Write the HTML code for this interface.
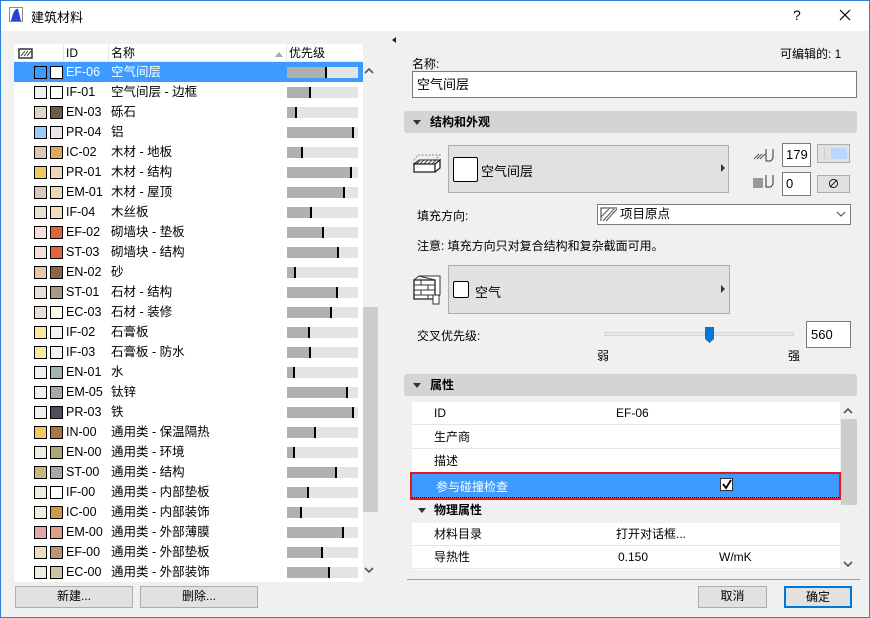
<!DOCTYPE html>
<html><head><meta charset="utf-8"><style>
*{margin:0;padding:0;box-sizing:border-box}
body{width:870px;height:618px;overflow:hidden;background:#f0f0f0;font-family:"Liberation Sans","Noto Sans CJK SC",sans-serif;font-size:12px;color:#000;position:relative}
.a{position:absolute}
#tb{left:0;top:0;width:870px;height:31px;background:#fff;border:1px solid #2b7fd4;border-bottom:none}
#win{left:0;top:0;width:870px;height:618px;border:1px solid #2b7fd4;pointer-events:none}
.list{left:14px;top:44px;width:349px;height:538px;background:#fff}
.row{position:absolute;left:0;width:349px;height:20px;line-height:20px;font-size:12.5px}
.row.sel{background:#3d9bff;color:#fff}
.s1,.s2{position:absolute;top:4px;width:13px;height:13px;border:1px solid #000}
.s1{left:20px}.s2{left:36px}
.id{position:absolute;left:52px}
.nm{position:absolute;left:97px}
.bar{position:absolute;left:273px;top:5px;width:71px;height:11px;background:#e4e4e4}
.bar i{position:absolute;left:0;top:0;height:11px;background:#b0b0b0;border-right:2px solid #000}
.btn{position:absolute;background:#e1e1e1;border:1px solid #adadad;text-align:center;line-height:19px;font-size:12px}
.inp{position:absolute;background:#fff;border:1px solid #7a7a7a;padding-left:4px}
.sec{position:absolute;left:404px;width:453px;height:22px;background:#d4d4d4;border-radius:3px;font-weight:bold;line-height:22px;padding-left:26px;font-size:12px}
.sec:before{content:"";position:absolute;left:9px;top:9px;border:4px solid transparent;border-top:5px solid #333}
.pr{position:absolute;left:412px;width:428px;height:23px;line-height:23px;background:#fff;border-bottom:1px solid #e6e6e6}
.pr span{position:absolute}
</style></head><body>
<div id="tb" class="a"></div>
<svg class="a" style="left:9px;top:7px" width="14" height="15"><rect x="0.5" y="0.5" width="13" height="14" fill="#fff" stroke="#888"/><path d="M2 14 C4 4 7 1 9 2 C10 6 11 10 12 14Z" fill="#2a3fd6"/></svg>
<div class="a" style="left:31px;top:7px;font-size:13px">建筑材料</div>
<div class="a" style="left:793px;top:7px;font-size:14px">?</div>
<svg class="a" style="left:839px;top:9px" width="12" height="12"><path d="M1 1L11 11M11 1L1 11" stroke="#000" stroke-width="1.2"/></svg>

<div class="list a">
<div class="a" style="left:0;top:0;width:349px;height:18px;border-bottom:1px solid #eee;line-height:18px">
<svg class="a" style="left:4px;top:4px" width="15" height="11"><rect x="1" y="1" width="13" height="9" fill="none" stroke="#333" stroke-width="1.5"/><path d="M3 8L7 3M6 8L10 3M9 8L13 3" stroke="#333"/></svg>
<div class="a" style="left:49px;top:0;width:1px;height:18px;background:#e5e5e5"></div>
<span class="a" style="left:52px">ID</span>
<div class="a" style="left:94px;top:0;width:1px;height:18px;background:#e5e5e5"></div>
<span class="a" style="left:97px">名称</span>
<div class="a" style="left:261px;top:8px;border:4px solid transparent;border-bottom:5px solid #aaa;border-top:none"></div>
<div class="a" style="left:272px;top:0;width:1px;height:18px;background:#e5e5e5"></div>
<span class="a" style="left:275px">优先级</span>
</div>
<div class="row sel" style="top:18px"><b class="s1" style="background:#3d9bff"></b><b class="s2" style="background:#fff"></b><span class="id">EF-06</span><span class="nm">空气间层</span><div class="bar"><i style="width:40px"></i></div></div>
<div class="row" style="top:38px"><b class="s1" style="background:#f0f0f0"></b><b class="s2" style="background:#fff"></b><span class="id">IF-01</span><span class="nm">空气间层 - 边框</span><div class="bar"><i style="width:24px"></i></div></div>
<div class="row" style="top:58px"><b class="s1" style="background:#e0d6c8"></b><b class="s2" style="background:#6e5a46"></b><span class="id">EN-03</span><span class="nm">砾石</span><div class="bar"><i style="width:10px"></i></div></div>
<div class="row" style="top:78px"><b class="s1" style="background:#99c9ff"></b><b class="s2" style="background:#ece4e4"></b><span class="id">PR-04</span><span class="nm">铝</span><div class="bar"><i style="width:67px"></i></div></div>
<div class="row" style="top:98px"><b class="s1" style="background:#dcc8b8"></b><b class="s2" style="background:#e0a858"></b><span class="id">IC-02</span><span class="nm">木材 - 地板</span><div class="bar"><i style="width:16px"></i></div></div>
<div class="row" style="top:118px"><b class="s1" style="background:#f0c860"></b><b class="s2" style="background:#ecd8b8"></b><span class="id">PR-01</span><span class="nm">木材 - 结构</span><div class="bar"><i style="width:65px"></i></div></div>
<div class="row" style="top:138px"><b class="s1" style="background:#dcc8b8"></b><b class="s2" style="background:#ecd8b8"></b><span class="id">EM-01</span><span class="nm">木材 - 屋顶</span><div class="bar"><i style="width:58px"></i></div></div>
<div class="row" style="top:158px"><b class="s1" style="background:#e8e0d0"></b><b class="s2" style="background:#f0dcc0"></b><span class="id">IF-04</span><span class="nm">木丝板</span><div class="bar"><i style="width:25px"></i></div></div>
<div class="row" style="top:178px"><b class="s1" style="background:#f4e0d8"></b><b class="s2" style="background:#e0643c"></b><span class="id">EF-02</span><span class="nm">砌墙块 - 垫板</span><div class="bar"><i style="width:37px"></i></div></div>
<div class="row" style="top:198px"><b class="s1" style="background:#f4e0d8"></b><b class="s2" style="background:#e0643c"></b><span class="id">ST-03</span><span class="nm">砌墙块 - 结构</span><div class="bar"><i style="width:52px"></i></div></div>
<div class="row" style="top:218px"><b class="s1" style="background:#e8c8a8"></b><b class="s2" style="background:#8c6448"></b><span class="id">EN-02</span><span class="nm">砂</span><div class="bar"><i style="width:9px"></i></div></div>
<div class="row" style="top:238px"><b class="s1" style="background:#e8e0d8"></b><b class="s2" style="background:#a89888"></b><span class="id">ST-01</span><span class="nm">石材 - 结构</span><div class="bar"><i style="width:51px"></i></div></div>
<div class="row" style="top:258px"><b class="s1" style="background:#e8e0d8"></b><b class="s2" style="background:#fcfcec"></b><span class="id">EC-03</span><span class="nm">石材 - 装修</span><div class="bar"><i style="width:45px"></i></div></div>
<div class="row" style="top:278px"><b class="s1" style="background:#f8e8a0"></b><b class="s2" style="background:#f0f4ec"></b><span class="id">IF-02</span><span class="nm">石膏板</span><div class="bar"><i style="width:23px"></i></div></div>
<div class="row" style="top:298px"><b class="s1" style="background:#f8e8a0"></b><b class="s2" style="background:#f0f4ec"></b><span class="id">IF-03</span><span class="nm">石膏板 - 防水</span><div class="bar"><i style="width:24px"></i></div></div>
<div class="row" style="top:318px"><b class="s1" style="background:#f0f0f0"></b><b class="s2" style="background:#a0b4b0"></b><span class="id">EN-01</span><span class="nm">水</span><div class="bar"><i style="width:8px"></i></div></div>
<div class="row" style="top:338px"><b class="s1" style="background:#f0f0f0"></b><b class="s2" style="background:#a8a8a8"></b><span class="id">EM-05</span><span class="nm">钛锌</span><div class="bar"><i style="width:61px"></i></div></div>
<div class="row" style="top:358px"><b class="s1" style="background:#f0f0f0"></b><b class="s2" style="background:#4c5058"></b><span class="id">PR-03</span><span class="nm">铁</span><div class="bar"><i style="width:67px"></i></div></div>
<div class="row" style="top:378px"><b class="s1" style="background:#f8c860"></b><b class="s2" style="background:#a87840"></b><span class="id">IN-00</span><span class="nm">通用类 - 保温隔热</span><div class="bar"><i style="width:29px"></i></div></div>
<div class="row" style="top:398px"><b class="s1" style="background:#f0ece0"></b><b class="s2" style="background:#aca878"></b><span class="id">EN-00</span><span class="nm">通用类 - 环境</span><div class="bar"><i style="width:8px"></i></div></div>
<div class="row" style="top:418px"><b class="s1" style="background:#c8b880"></b><b class="s2" style="background:#a8a8a8"></b><span class="id">ST-00</span><span class="nm">通用类 - 结构</span><div class="bar"><i style="width:50px"></i></div></div>
<div class="row" style="top:438px"><b class="s1" style="background:#f0ece0"></b><b class="s2" style="background:#fff"></b><span class="id">IF-00</span><span class="nm">通用类 - 内部垫板</span><div class="bar"><i style="width:22px"></i></div></div>
<div class="row" style="top:458px"><b class="s1" style="background:#f0ece0"></b><b class="s2" style="background:#d09848"></b><span class="id">IC-00</span><span class="nm">通用类 - 内部装饰</span><div class="bar"><i style="width:15px"></i></div></div>
<div class="row" style="top:478px"><b class="s1" style="background:#e0a8a8"></b><b class="s2" style="background:#e09c84"></b><span class="id">EM-00</span><span class="nm">通用类 - 外部薄膜</span><div class="bar"><i style="width:57px"></i></div></div>
<div class="row" style="top:498px"><b class="s1" style="background:#ecdcc0"></b><b class="s2" style="background:#bc9474"></b><span class="id">EF-00</span><span class="nm">通用类 - 外部垫板</span><div class="bar"><i style="width:36px"></i></div></div>
<div class="row" style="top:518px"><b class="s1" style="background:#f0ece0"></b><b class="s2" style="background:#c8c4a4"></b><span class="id">EC-00</span><span class="nm">通用类 - 外部装饰</span><div class="bar"><i style="width:43px"></i></div></div>
</div>
<div class="a" style="left:363px;top:307px;width:15px;height:205px;background:#cdcdcd"></div>
<svg class="a" style="left:364px;top:67px" width="10" height="8"><path d="M1 6L5 2L9 6" fill="none" stroke="#555" stroke-width="1.6"/></svg>
<svg class="a" style="left:364px;top:566px" width="10" height="8"><path d="M1 2L5 6L9 2" fill="none" stroke="#555" stroke-width="1.6"/></svg>
<div class="btn" style="left:15px;top:586px;width:118px;height:22px">新建...</div>
<div class="btn" style="left:140px;top:586px;width:118px;height:22px">删除...</div>

<div class="a" style="left:392px;top:37px;border:3px solid transparent;border-right:4px solid #222;border-left:none"></div>
<div class="a" style="left:780px;top:45px">可编辑的: 1</div>
<div class="a" style="left:412px;top:55px">名称:</div>
<div class="inp" style="left:412px;top:71px;width:445px;height:27px;line-height:25px;font-size:13px">空气间层</div>
<div class="sec" style="top:111px">结构和外观</div>

<svg class="a" style="left:413px;top:154px" width="28" height="28"><path d="M5 1h22l-5 5v0M1 10V6l4-5" fill="none" stroke="#888" stroke-dasharray="2 1.5"/><path d="M1 10L6 6H27L22 10Z" fill="#fff" stroke="#222"/><path d="M3 10L7 7M7 10L11 6M11 10L15 6M15 10L19 6M19 10L23 6M23 10L26 7" stroke="#444"/><path d="M1 10H22V18H1Z M22 10L27 6V14L22 18" fill="#fff" stroke="#222" stroke-width="1.3"/></svg>
<div class="btn" style="left:448px;top:145px;width:281px;height:48px"></div>
<div class="a" style="left:453px;top:157px;width:25px;height:25px;background:#fff;border:1px solid #000;border-radius:2px"></div>
<div class="a" style="left:481px;top:161px;font-size:13px">空气间层</div>
<div class="a" style="left:721px;top:164px;border:4px solid transparent;border-left:4px solid #333;border-right:none"></div>

<svg class="a" style="left:753px;top:147px" width="24" height="17"><path d="M1 12L6 7M4 12L9 7M7 12L12 7" stroke="#555"/><path d="M13 2V14H18M20 2V11L18 14" fill="none" stroke="#333"/></svg>
<div class="inp" style="left:782px;top:143px;width:29px;height:24px;line-height:22px;font-size:13px;padding-left:3px">179</div>
<div class="btn" style="left:817px;top:144px;width:33px;height:19px"><div class="a" style="left:13px;top:3px;width:16px;height:11px;background:#b8d8ff;border-radius:2px"></div><div class="a" style="left:6px;top:3px;width:1px;height:11px;background:#ccc"></div></div>
<svg class="a" style="left:753px;top:173px" width="24" height="20"><rect x="0" y="5" width="10" height="10" fill="#999"/><path d="M13 2V14H18M20 2V11L18 14" fill="none" stroke="#333"/></svg>
<div class="inp" style="left:782px;top:172px;width:29px;height:24px;line-height:22px;font-size:13px;padding-left:3px">0</div>
<div class="btn" style="left:817px;top:175px;width:33px;height:18px;line-height:16px">∅</div>

<div class="a" style="left:417px;top:207px">填充方向:</div>
<div class="inp" style="left:597px;top:204px;width:254px;height:21px;line-height:19px;padding-left:22px;font-size:12.5px">项目原点</div>
<svg class="a" style="left:600px;top:207px" width="18" height="15"><path d="M1 14V1H17" fill="none" stroke="#333"/><path d="M3 14L14 2M6 14L17 2M1 10L9 2" stroke="#555"/></svg>
<svg class="a" style="left:836px;top:211px" width="10" height="7"><path d="M1 1L5 5L9 1" fill="none" stroke="#444"/></svg>
<div class="a" style="left:417px;top:237px">注意: 填充方向只对复合结构和复杂截面可用。</div>

<svg class="a" style="left:413px;top:275px" width="28" height="30"><path d="M6 1H27L27 20L22 24V5Z M1 5L6 1 M1 5H22" fill="#fff" stroke="#333"/><path d="M1 5H22V24H1Z" fill="#fff" stroke="#222" stroke-width="1.3"/><path d="M1 10H22M1 15H22M1 20H22M8 5V10M15 10V15M8 15V20M15 20V24" stroke="#333"/><rect x="20" y="20" width="6" height="9" fill="#fff" stroke="#333"/></svg>
<div class="btn" style="left:448px;top:265px;width:282px;height:49px"></div>
<div class="a" style="left:453px;top:281px;width:16px;height:17px;background:#fff;border:1px solid #000;border-radius:2px"></div>
<div class="a" style="left:475px;top:282px;font-size:13px">空气</div>
<div class="a" style="left:721px;top:285px;border:4px solid transparent;border-left:4px solid #333;border-right:none"></div>

<div class="a" style="left:417px;top:327px">交叉优先级:</div>
<div class="a" style="left:604px;top:332px;width:190px;height:4px;background:#e7e7e7;border:1px solid #d6d6d6"></div>
<svg class="a" style="left:705px;top:327px" width="9" height="16"><path d="M0 0H9V12L4.5 16L0 12Z" fill="#0078d7"/></svg>
<div class="inp" style="left:806px;top:321px;width:45px;height:27px;line-height:25px;font-size:13px">560</div>
<div class="a" style="left:597px;top:347px">弱</div>
<div class="a" style="left:788px;top:347px">强</div>

<div class="sec" style="top:374px">属性</div>
<div class="a" style="left:412px;top:402px;width:428px;height:168px;background:#fff"></div>
<div class="pr" style="top:402px"><span style="left:22px">ID</span><span style="left:204px">EF-06</span></div>
<div class="pr" style="top:426px"><span style="left:22px">生产商</span></div>
<div class="pr" style="top:450px"><span style="left:22px">描述</span></div>
<div class="a" style="left:410px;top:472px;width:431px;height:28px;border:2px solid #e8161c;background:#3d9bff">
<span class="a" style="left:24px;top:4px;color:#fff">参与碰撞检查</span>
<svg class="a" style="left:308px;top:4px" width="14" height="14"><rect x="0.5" y="0.5" width="12" height="12" fill="#fff" stroke="#333"/><path d="M3 6L6 10L11 2" fill="none" stroke="#000" stroke-width="1.8"/></svg>
<div class="a" style="left:0;bottom:0;width:427px;height:1px;border-bottom:1px dotted #000"></div></div>
<div class="a" style="left:412px;top:500px;width:428px;height:23px;background:#f0f0f0;font-weight:bold;line-height:21px;padding-left:22px">物理属性</div>
<div class="a" style="left:418px;top:508px;border:4px solid transparent;border-top:5px solid #333"></div>
<div class="pr" style="top:523px"><span style="left:22px">材料目录</span><span style="left:204px">打开对话框...</span></div>
<div class="pr" style="top:546px"><span style="left:22px">导热性</span><span style="left:206px">0.150</span><span style="left:307px">W/mK</span></div>
<div class="a" style="left:841px;top:419px;width:16px;height:86px;background:#cdcdcd"></div>
<svg class="a" style="left:843px;top:407px" width="10" height="8"><path d="M1 6L5 2L9 6" fill="none" stroke="#555" stroke-width="1.6"/></svg>
<svg class="a" style="left:843px;top:560px" width="10" height="8"><path d="M1 2L5 6L9 2" fill="none" stroke="#555" stroke-width="1.6"/></svg>
<div class="a" style="left:407px;top:579px;width:453px;height:1px;background:#a0a0a0"></div>
<div class="btn" style="left:698px;top:586px;width:69px;height:22px">取消</div>
<div class="btn" style="left:784px;top:586px;width:68px;height:22px;border:2px solid #0078d7;line-height:18px">确定</div>
<div id="win" class="a"></div>
</body></html>
